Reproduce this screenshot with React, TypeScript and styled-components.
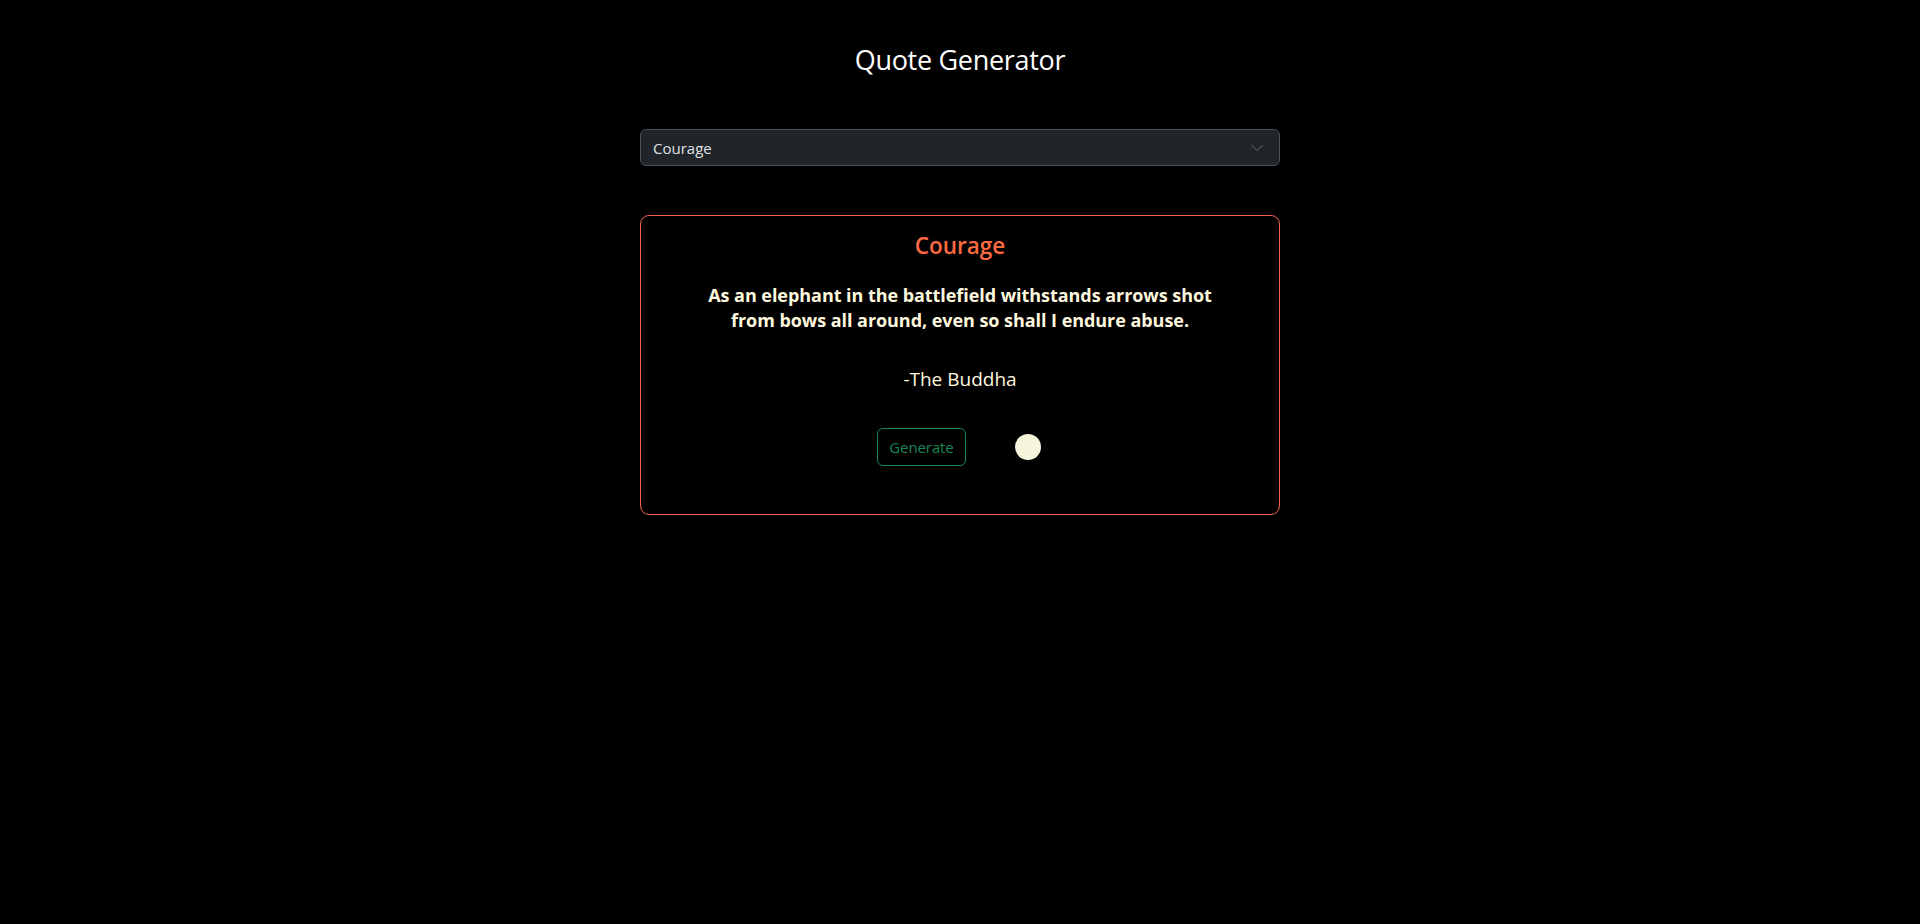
import React, { useState } from "react";
import styled, { createGlobalStyle } from "styled-components";

const GlobalStyle = createGlobalStyle`
  html, body {
    margin: 0;
    padding: 0;
    background: #000;
  }
  body {
    font-family: "Open Sans", "Noto Sans", "Liberation Sans", sans-serif;
    color: #dee2e6;
  }
  * { box-sizing: border-box; }
`;

const Page = styled.div`
  min-height: 924px;
  background: #000;
  display: flex;
  flex-direction: column;
  align-items: center;
  padding-top: 41px;
`;

const Title = styled.h1`
  margin: 0;
  font-size: 27px;
  font-weight: 400;
  line-height: 38px;
  color: #fff;
  letter-spacing: -0.3px;
`;

const SelectWrap = styled.div`
  position: relative;
  width: 640px;
  margin-top: 50px;
`;

const Select = styled.select`
  appearance: none;
  width: 100%;
  height: 37px;
  padding: 0 36px 0 12px;
  font-family: inherit;
  font-size: 15px;
  color: #dee2e6;
  background: #212529;
  border: 1px solid #495057;
  border-radius: 6px;
  outline: none;
`;

const Chevron = styled.svg`
  position: absolute;
  right: 16px;
  top: 50%;
  transform: translateY(-50%);
  pointer-events: none;
`;

const Card = styled.div`
  width: 640px;
  margin-top: 49px;
  border: 1px solid #f2654f;
  border-radius: 9px;
  padding: 16px 16px 48px;
  display: flex;
  flex-direction: column;
  align-items: center;
`;

const CardTitle = styled.h2`
  margin: 0;
  font-size: 22.5px;
  font-weight: 600;
  line-height: 28px;
  color: #ff6a43;
`;

const Quote = styled.p`
  margin: 23px 0 0;
  max-width: 530px;
  text-align: center;
  font-size: 18px;
  font-weight: 700;
  line-height: 24.5px;
  color: #fff8df;
  letter-spacing: -0.05px;
`;

const Author = styled.p`
  margin: 35px 0 0;
  font-size: 19px;
  font-weight: 400;
  line-height: 24px;
  color: #fff8df;
`;

const Controls = styled.div`
  margin-top: 37px;
  display: flex;
  align-items: center;
  gap: 49px;
  padding-right: 2px;
`;

const Button = styled.button`
  height: 38px;
  padding: 0 11px;
  font-family: inherit;
  font-size: 15px;
  font-weight: 400;
  color: #198754;
  background: transparent;
  border: 1px solid #198754;
  border-radius: 6px;
  cursor: pointer;
  letter-spacing: -0.1px;
`;

const Dot = styled.div`
  width: 26px;
  height: 26px;
  border-radius: 50%;
  background: #f5f5dc;
`;

export default function App() {
  const [cat, setCat] = useState("Courage");
  return (
    <>
      <GlobalStyle />
      <Page>
        <Title>Quote Generator</Title>
        <SelectWrap>
          <Select value={cat} onChange={(e) => setCat(e.target.value)}>
            <option>Courage</option>
            <option>Wisdom</option>
            <option>Love</option>
          </Select>
          <Chevron width="14" height="14" viewBox="0 0 16 16" fill="none">
            <path d="M2 5l6 6 6-6" stroke="#495057" strokeWidth="1.6" strokeLinecap="round" strokeLinejoin="round" />
          </Chevron>
        </SelectWrap>
        <Card>
          <CardTitle>{cat}</CardTitle>
          <Quote>
            As an elephant in the battlefield withstands arrows shot from bows all around, even so shall I endure abuse.
          </Quote>
          <Author>-The Buddha</Author>
          <Controls>
            <Button>Generate</Button>
            <Dot />
          </Controls>
        </Card>
      </Page>
    </>
  );
}
